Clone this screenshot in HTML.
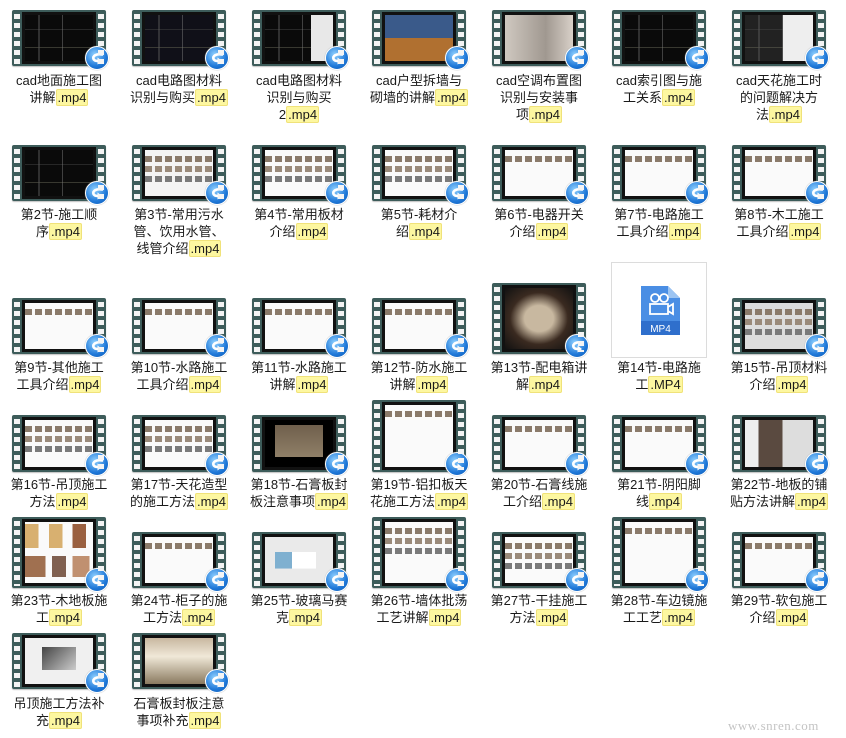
<!DOCTYPE html>
<html><head><meta charset="utf-8"><style>
body{margin:0;width:846px;height:738px;background:#fff;position:relative;overflow:hidden;font-family:"Liberation Sans","Noto Sans CJK SC",sans-serif;font-size:13px;color:#1a1a1a}
.t{position:absolute;width:94px;background:#3d5c5a;border-radius:2px;box-shadow:0 1px 1px rgba(0,0,0,.25)}
.t:before,.t:after{content:"";position:absolute;top:4px;bottom:2px;width:6px;background:repeating-linear-gradient(to bottom,#f4f4f4 0 5px,transparent 5px 9px)}
.t:before{left:2px}.t:after{right:2px}
.i{position:absolute;left:10px;right:10px;top:2px;bottom:2px;background:#111;padding:3px}
.p{width:100%;height:100%}
.d{background:#0a0a0a;background-image:linear-gradient(90deg,transparent 20%,#555 20% 21%,transparent 21% 55%,#777 55% 56%,transparent 56%),linear-gradient(transparent 30%,#444 30% 31%,transparent 31% 70%,#665 70% 71%,transparent 71%)}
.g{background:#fafafa;background-image:repeating-linear-gradient(90deg,#8a7a6a 0 7px,transparent 7px 10px);background-size:100% 6px;background-repeat:no-repeat;background-position:0 6px}
.g2{background:#fafafa;background-image:repeating-linear-gradient(90deg,#8a7a6a 0 7px,transparent 7px 10px),repeating-linear-gradient(90deg,#9a8a7a 0 7px,transparent 7px 10px),repeating-linear-gradient(90deg,#7a7a7a 0 7px,transparent 7px 10px);background-size:100% 6px;background-repeat:no-repeat;background-position:0 6px,0 16px,0 26px}
.b{position:absolute;right:-3px;bottom:-4px;width:22px;height:22px;border-radius:50%;background:radial-gradient(circle at 40% 35%,#8fd0ff,#1f78d8 60%,#0d57b0);border:1px solid #fff;box-shadow:0 0 1px #888}
.b svg{position:absolute;left:3px;top:3px}
.x{position:absolute;width:118px;text-align:center;line-height:17px;white-space:nowrap}
.m{background:#fdf7a0;border:1px solid #f0e27a;border-radius:2px;padding:0 1px}
.wm{position:absolute;left:728px;top:718px;color:#c4c4c4;font-size:13px;font-family:"Liberation Serif",serif;letter-spacing:.5px}
</style></head><body>
<svg width="0" height="0" style="position:absolute"><defs><symbol id="ar" viewBox="0 0 16 16"><path d="M13 4.5 C7 3.5 3.5 6 4.5 9 C5.2 10.8 7 11 9 11" fill="none" stroke="#fff" stroke-width="2.6" stroke-linecap="round"/><path d="M8.5 7.5 L13 11 L8.5 14.5 Z" fill="#fff"/></symbol></defs></svg>

<!-- Row 1 -->
<div class="t" style="left:12px;top:10px;height:56px"><div class="i"><div class="p d"></div></div><div class="b"><svg width="16" height="16"><use href="#ar"/></svg></div></div>
<div class="x" style="left:0;top:72px">cad地面施工图<br>讲解<span class="m">.mp4</span></div>
<div class="t" style="left:132px;top:10px;height:56px"><div class="i"><div class="p d" style="background-color:#101018"></div></div><div class="b"><svg width="16" height="16"><use href="#ar"/></svg></div></div>
<div class="x" style="left:120px;top:72px">cad电路图材料<br>识别与购买<span class="m">.mp4</span></div>
<div class="t" style="left:252px;top:10px;height:56px"><div class="i"><div class="p d" style="background-color:#0a0a0a;box-shadow:inset -22px 0 0 #e8e8e8"></div></div><div class="b"><svg width="16" height="16"><use href="#ar"/></svg></div></div>
<div class="x" style="left:240px;top:72px">cad电路图材料<br>识别与购买<br>2<span class="m">.mp4</span></div>
<div class="t" style="left:372px;top:10px;height:56px"><div class="i"><div class="p" style="background:linear-gradient(#3a5a8a 0 50%,#b07030 50%)"></div></div><div class="b"><svg width="16" height="16"><use href="#ar"/></svg></div></div>
<div class="x" style="left:360px;top:72px">cad户型拆墙与<br>砌墙的讲解<span class="m">.mp4</span></div>
<div class="t" style="left:492px;top:10px;height:56px"><div class="i"><div class="p" style="background:linear-gradient(90deg,#cfc8c0,#a09890 60%,#d8d0c8)"></div></div><div class="b"><svg width="16" height="16"><use href="#ar"/></svg></div></div>
<div class="x" style="left:480px;top:72px">cad空调布置图<br>识别与安装事<br>项<span class="m">.mp4</span></div>
<div class="t" style="left:612px;top:10px;height:56px"><div class="i"><div class="p d"></div></div><div class="b"><svg width="16" height="16"><use href="#ar"/></svg></div></div>
<div class="x" style="left:600px;top:72px">cad索引图与施<br>工关系<span class="m">.mp4</span></div>
<div class="t" style="left:732px;top:10px;height:56px"><div class="i"><div class="p d" style="background-color:#222;box-shadow:inset -30px 0 0 #eee"></div></div><div class="b"><svg width="16" height="16"><use href="#ar"/></svg></div></div>
<div class="x" style="left:720px;top:72px">cad天花施工时<br>的问题解决方<br>法<span class="m">.mp4</span></div>

<!-- Row 2 -->
<div class="t" style="left:12px;top:145px;height:56px"><div class="i"><div class="p d"></div></div><div class="b"><svg width="16" height="16"><use href="#ar"/></svg></div></div>
<div class="x" style="left:0;top:206px">第2节-施工顺<br>序<span class="m">.mp4</span></div>
<div class="t" style="left:132px;top:145px;height:56px"><div class="i"><div class="p g2" style="background-color:#f4f4f4"></div></div><div class="b"><svg width="16" height="16"><use href="#ar"/></svg></div></div>
<div class="x" style="left:120px;top:206px">第3节-常用污水<br>管、饮用水管、<br>线管介绍<span class="m">.mp4</span></div>
<div class="t" style="left:252px;top:145px;height:56px"><div class="i"><div class="p g2"></div></div><div class="b"><svg width="16" height="16"><use href="#ar"/></svg></div></div>
<div class="x" style="left:240px;top:206px">第4节-常用板材<br>介绍<span class="m">.mp4</span></div>
<div class="t" style="left:372px;top:145px;height:56px"><div class="i"><div class="p g2"></div></div><div class="b"><svg width="16" height="16"><use href="#ar"/></svg></div></div>
<div class="x" style="left:360px;top:206px">第5节-耗材介<br>绍<span class="m">.mp4</span></div>
<div class="t" style="left:492px;top:145px;height:56px"><div class="i"><div class="p g"></div></div><div class="b"><svg width="16" height="16"><use href="#ar"/></svg></div></div>
<div class="x" style="left:480px;top:206px">第6节-电器开关<br>介绍<span class="m">.mp4</span></div>
<div class="t" style="left:612px;top:145px;height:56px"><div class="i"><div class="p g"></div></div><div class="b"><svg width="16" height="16"><use href="#ar"/></svg></div></div>
<div class="x" style="left:600px;top:206px">第7节-电路施工<br>工具介绍<span class="m">.mp4</span></div>
<div class="t" style="left:732px;top:145px;height:56px"><div class="i"><div class="p g"></div></div><div class="b"><svg width="16" height="16"><use href="#ar"/></svg></div></div>
<div class="x" style="left:720px;top:206px">第8节-木工施工<br>工具介绍<span class="m">.mp4</span></div>

<!-- Row 3 -->
<div class="t" style="left:12px;top:298px;height:56px"><div class="i"><div class="p g"></div></div><div class="b"><svg width="16" height="16"><use href="#ar"/></svg></div></div>
<div class="x" style="left:0;top:359px">第9节-其他施工<br>工具介绍<span class="m">.mp4</span></div>
<div class="t" style="left:132px;top:298px;height:56px"><div class="i"><div class="p g"></div></div><div class="b"><svg width="16" height="16"><use href="#ar"/></svg></div></div>
<div class="x" style="left:120px;top:359px">第10节-水路施工<br>工具介绍<span class="m">.mp4</span></div>
<div class="t" style="left:252px;top:298px;height:56px"><div class="i"><div class="p g"></div></div><div class="b"><svg width="16" height="16"><use href="#ar"/></svg></div></div>
<div class="x" style="left:240px;top:359px">第11节-水路施工<br>讲解<span class="m">.mp4</span></div>
<div class="t" style="left:372px;top:298px;height:56px"><div class="i"><div class="p g"></div></div><div class="b"><svg width="16" height="16"><use href="#ar"/></svg></div></div>
<div class="x" style="left:360px;top:359px">第12节-防水施工<br>讲解<span class="m">.mp4</span></div>
<div class="t" style="left:492px;top:283px;height:71px"><div class="i"><div class="p" style="background:radial-gradient(ellipse at 50% 50%,#c8b8a0 0 30%,#3a2a20 60%,#111)"></div></div><div class="b"><svg width="16" height="16"><use href="#ar"/></svg></div></div>
<div class="x" style="left:480px;top:359px">第13节-配电箱讲<br>解<span class="m">.mp4</span></div>
<div style="position:absolute;left:611px;top:262px;width:94px;height:94px;border:1px solid #dcdcdc">
<svg width="94" height="94" style="position:absolute;left:0;top:0"><path d="M29 23 H56 L68 35 V72 H29 Z" fill="#4a8ee4"/><path d="M56 23 V35 H68" fill="#9cc4f2"/><rect x="29" y="58" width="39" height="14" fill="#2f6fcc"/><g fill="none" stroke="#fff" stroke-width="1.8"><circle cx="43" cy="35" r="4"/><circle cx="52" cy="35" r="4"/><rect x="38" y="41" width="18" height="10"/><path d="M56 44 L61 41 V51 L56 48"/></g><text x="48.5" y="69" text-anchor="middle" fill="#fff" font-size="10" font-family="Liberation Sans">MP4</text></svg></div>
<div class="x" style="left:600px;top:359px">第14节-电路施<br>工<span class="m">.MP4</span></div>
<div class="t" style="left:732px;top:298px;height:56px"><div class="i"><div class="p g2" style="background-color:#ddd"></div></div><div class="b"><svg width="16" height="16"><use href="#ar"/></svg></div></div>
<div class="x" style="left:720px;top:359px">第15节-吊顶材料<br>介绍<span class="m">.mp4</span></div>

<!-- Row 4 -->
<div class="t" style="left:12px;top:415px;height:57px"><div class="i"><div class="p g2"></div></div><div class="b"><svg width="16" height="16"><use href="#ar"/></svg></div></div>
<div class="x" style="left:0;top:476px">第16节-吊顶施工<br>方法<span class="m">.mp4</span></div>
<div class="t" style="left:132px;top:415px;height:57px"><div class="i"><div class="p g2"></div></div><div class="b"><svg width="16" height="16"><use href="#ar"/></svg></div></div>
<div class="x" style="left:120px;top:476px">第17节-天花造型<br>的施工方法<span class="m">.mp4</span></div>
<div class="t" style="left:252px;top:415px;height:57px"><div class="i"><div class="p" style="background:#000;box-shadow:inset 10px 5px 0 #000,inset -10px -10px 0 #000;background-image:linear-gradient(#6a5a48,#9a8a70)"></div></div><div class="b"><svg width="16" height="16"><use href="#ar"/></svg></div></div>
<div class="x" style="left:240px;top:476px">第18节-石膏板封<br>板注意事项<span class="m">.mp4</span></div>
<div class="t" style="left:372px;top:400px;height:72px"><div class="i"><div class="p g"></div></div><div class="b"><svg width="16" height="16"><use href="#ar"/></svg></div></div>
<div class="x" style="left:360px;top:476px">第19节-铝扣板天<br>花施工方法<span class="m">.mp4</span></div>
<div class="t" style="left:492px;top:415px;height:57px"><div class="i"><div class="p g"></div></div><div class="b"><svg width="16" height="16"><use href="#ar"/></svg></div></div>
<div class="x" style="left:480px;top:476px">第20节-石膏线施<br>工介绍<span class="m">.mp4</span></div>
<div class="t" style="left:612px;top:415px;height:57px"><div class="i"><div class="p g"></div></div><div class="b"><svg width="16" height="16"><use href="#ar"/></svg></div></div>
<div class="x" style="left:600px;top:476px">第21节-阴阳脚<br>线<span class="m">.mp4</span></div>
<div class="t" style="left:732px;top:415px;height:57px"><div class="i"><div class="p" style="background:linear-gradient(90deg,#eee 0 20%,#5a4a40 20% 55%,#ddd 55%)"></div></div><div class="b"><svg width="16" height="16"><use href="#ar"/></svg></div></div>
<div class="x" style="left:720px;top:476px">第22节-地板的铺<br>贴方法讲解<span class="m">.mp4</span></div>

<!-- Row 5 -->
<div class="t" style="left:12px;top:517px;height:71px"><div class="i"><div class="p" style="background:#fafafa;background-image:linear-gradient(90deg,#d8b070 0 20%,transparent 20% 35%,#d8b070 35% 55%,transparent 55% 70%,#9a6040 70% 90%,transparent 90%),linear-gradient(90deg,#a07050 0 30%,transparent 30% 40%,#806050 40% 60%,transparent 60% 70%,#c09070 70% 95%,transparent 95%);background-size:100% 40%,100% 35%;background-repeat:no-repeat;background-position:0 5%,0 85%"></div></div><div class="b"><svg width="16" height="16"><use href="#ar"/></svg></div></div>
<div class="x" style="left:0;top:592px">第23节-木地板施<br>工<span class="m">.mp4</span></div>
<div class="t" style="left:132px;top:532px;height:56px"><div class="i"><div class="p g"></div></div><div class="b"><svg width="16" height="16"><use href="#ar"/></svg></div></div>
<div class="x" style="left:120px;top:592px">第24节-柜子的施<br>工方法<span class="m">.mp4</span></div>
<div class="t" style="left:252px;top:532px;height:56px"><div class="i"><div class="p" style="background:#eaeaea;background-image:linear-gradient(90deg,transparent 15%,#7fb0d0 15% 40%,#fff 40% 75%,transparent 75%);background-size:100% 36%;background-repeat:no-repeat;background-position:0 50%"></div></div><div class="b"><svg width="16" height="16"><use href="#ar"/></svg></div></div>
<div class="x" style="left:240px;top:592px">第25节-玻璃马赛<br>克<span class="m">.mp4</span></div>
<div class="t" style="left:372px;top:517px;height:71px"><div class="i"><div class="p g2"></div></div><div class="b"><svg width="16" height="16"><use href="#ar"/></svg></div></div>
<div class="x" style="left:360px;top:592px">第26节-墙体批荡<br>工艺讲解<span class="m">.mp4</span></div>
<div class="t" style="left:492px;top:532px;height:56px"><div class="i"><div class="p g2"></div></div><div class="b"><svg width="16" height="16"><use href="#ar"/></svg></div></div>
<div class="x" style="left:480px;top:592px">第27节-干挂施工<br>方法<span class="m">.mp4</span></div>
<div class="t" style="left:612px;top:517px;height:71px"><div class="i"><div class="p g"></div></div><div class="b"><svg width="16" height="16"><use href="#ar"/></svg></div></div>
<div class="x" style="left:600px;top:592px">第28节-车边镜施<br>工工艺<span class="m">.mp4</span></div>
<div class="t" style="left:732px;top:532px;height:56px"><div class="i"><div class="p g"></div></div><div class="b"><svg width="16" height="16"><use href="#ar"/></svg></div></div>
<div class="x" style="left:720px;top:592px">第29节-软包施工<br>介绍<span class="m">.mp4</span></div>

<!-- Row 6 -->
<div class="t" style="left:12px;top:633px;height:56px"><div class="i"><div class="p" style="background:#f0f0f0;background-image:linear-gradient(135deg,#444,#ccc);background-size:50% 50%;background-repeat:no-repeat;background-position:50% 40%"></div></div><div class="b"><svg width="16" height="16"><use href="#ar"/></svg></div></div>
<div class="x" style="left:0;top:695px">吊顶施工方法补<br>充<span class="m">.mp4</span></div>
<div class="t" style="left:132px;top:633px;height:56px"><div class="i"><div class="p" style="background:linear-gradient(#c8b8a0,#f0e8d8 40%,#8a7a60)"></div></div><div class="b"><svg width="16" height="16"><use href="#ar"/></svg></div></div>
<div class="x" style="left:120px;top:695px">石膏板封板注意<br>事项补充<span class="m">.mp4</span></div>

<div class="wm">www.snren.com</div>
</body></html>
